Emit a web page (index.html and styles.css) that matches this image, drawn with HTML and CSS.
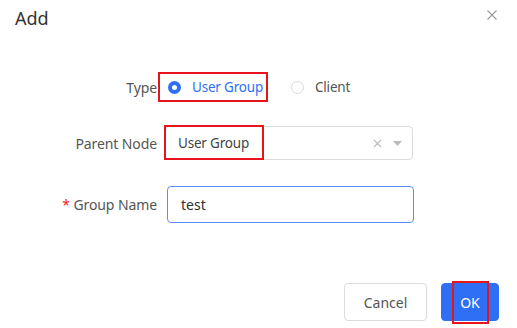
FILE: index.html
```html
<!DOCTYPE html>
<html lang="en">
<head>
    <meta charset="UTF-8">
    <title>Add</title>
    <link rel="stylesheet" href="styles.css">
</head>
<body>

<div class="dialog">
    <div class="dialog-header">
        <span class="dialog-title">Add</span>
        <svg class="close" width="10" height="10" viewBox="0 0 10 10">
            <path d="M0.5 0.5 L9.5 9.5 M9.5 0.5 L0.5 9.5" stroke="#999" stroke-width="1.1" fill="none"/>
        </svg>
    </div>

    <form class="form">
        <div class="form-row row-type">
            <label class="form-label">Type</label>
            <div class="radio-group">
                <span class="radio checked marked">
                    <span class="radio-dot"></span>
                    <span class="radio-text">User Group</span>
                </span>
                <span class="radio">
                    <span class="radio-dot"></span>
                    <span class="radio-text">Client</span>
                </span>
            </div>
        </div>

        <div class="form-row row-parent">
            <label class="form-label">Parent Node</label>
            <div class="select">
                <span class="select-value">User Group</span>
                <span class="select-icons">
                    <svg width="9" height="9" viewBox="0 0 9 9">
                        <path d="M1 1 L8 8 M8 1 L1 8" stroke="#bbb" stroke-width="1.1" fill="none"/>
                    </svg>
                    <svg width="9" height="5" viewBox="0 0 9 5">
                        <path d="M0 0 L9 0 L4.5 5 Z" fill="#bbb"/>
                    </svg>
                </span>
                <span class="mark mark-select"></span>
            </div>
        </div>

        <div class="form-row row-name">
            <label class="form-label"><span class="required">*</span> Group Name</label>
            <input class="text-input" type="text" value="test">
        </div>
    </form>

    <div class="dialog-footer">
        <button class="btn btn-cancel" type="button">Cancel</button>
        <button class="btn btn-ok" type="button">OK<span class="mark mark-ok"></span></button>
    </div>
</div>

</body>
</html>
```

FILE: styles.css
```css
body {
    margin: 0;
    background-color: #fff;
    font-family: 'Noto Sans', 'Open Sans', Arial, sans-serif;
    color: #555;
}
.dialog {
    width: 517px;
    height: 328px;
    box-sizing: border-box;
}
.dialog-header {
    height: 36px;
    display: flex;
    justify-content: space-between;
    align-items: flex-start;
    padding: 0 20px 0 15px;
}
.dialog-title {
    font-size: 18px;
    line-height: 36px;
    color: #333;
}
.close {
    margin-top: 10px;
}
.form {
    margin-top: 36px;
}
.form-row {
    display: flex;
    align-items: center;
}
.form-label {
    width: 157px;
    text-align: right;
    font-size: 14px;
    letter-spacing: -0.1px;
    color: #555;
}
.required {
    color: #f5222d;
}
.row-type {
    height: 30px;
}
.radio-group {
    display: flex;
    align-items: center;
    margin-left: 1px;
}
.radio {
    display: flex;
    align-items: center;
    height: 30px;
    box-sizing: border-box;
    padding: 0 0 0 8px;
    font-size: 13.5px;
    letter-spacing: -0.2px;
    color: #555;
}
.radio.marked {
    width: 110px;
    border: 2px solid #e8141b;
    margin-right: 15px;
}
.radio-dot {
    width: 13px;
    height: 13px;
    box-sizing: border-box;
    border: 1px solid #d9d9d9;
    border-radius: 50%;
    margin-right: 11px;
}
.radio.checked .radio-dot {
    border: 4px solid #2f6ff5;
    background-color: #fff;
}
.radio.checked .radio-text {
    color: #2f6ff5;
}
.row-parent {
    margin-top: 24px;
}
.select {
    position: relative;
    margin-left: 8px;
    width: 248px;
    height: 34px;
    box-sizing: border-box;
    border: 1px solid #dcdcdc;
    border-radius: 4px;
    display: flex;
    align-items: center;
    justify-content: space-between;
    padding: 0 10px 0 12px;
    font-size: 13.5px;
    letter-spacing: -0.2px;
    color: #444;
}
.select-icons {
    display: flex;
    align-items: center;
    gap: 11px;
}
.mark {
    position: absolute;
    border: 2px solid #e8141b;
    box-sizing: border-box;
}
.mark-select {
    left: -2px;
    top: -2px;
    width: 100px;
    height: 35px;
}
.row-name {
    margin-top: 26px;
}
.text-input {
    margin-left: 10px;
    width: 247px;
    height: 37px;
    box-sizing: border-box;
    border: 1px solid #5b8cf7;
    border-radius: 4px;
    padding: 0 13px;
    font-family: 'Noto Sans', 'Open Sans', Arial, sans-serif;
    font-size: 14px;
    color: #333;
    outline: none;
}
.dialog-footer {
    margin-top: 60px;
    display: flex;
    justify-content: flex-end;
    gap: 14px;
    padding-right: 18px;
}
.btn {
    position: relative;
    height: 38px;
    border-radius: 4px;
    font-family: 'Noto Sans', 'Open Sans', Arial, sans-serif;
    font-size: 14px;
    cursor: pointer;
}
.btn-cancel {
    width: 83px;
    background-color: #fff;
    border: 1px solid #dcdcdc;
    color: #555;
}
.btn-ok {
    width: 58px;
    background-color: #2f6ff5;
    border: 1px solid #2f6ff5;
    color: #fff;
}
.mark-ok {
    left: 10px;
    top: -3px;
    width: 37px;
    height: 43px;
}
```
